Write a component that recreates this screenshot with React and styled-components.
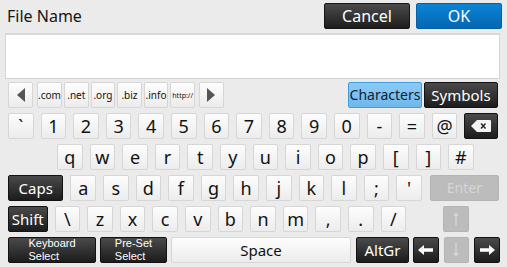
import React from 'react';
import styled, {createGlobalStyle, css} from 'styled-components';

const Global = createGlobalStyle`
    body{
        margin:0;
        background:#ebebeb;
        font-family:"Noto Sans", "Open Sans", sans-serif;
    }
`;

const Page = styled.div`
    width:507px;
    height:267px;
    background:#ebebeb;
    display:flex;
    flex-direction:column;
    box-sizing:border-box;
`;

const Header = styled.div`
    display:flex;
    align-items:center;
    height:33px;
    padding:0 5px 0 7px;
    box-sizing:border-box;
    padding-bottom:2px;

    .title{
        flex:1;
        font-size:16px;
        color:#151515;
    }
`;

const TopBtn = styled.div`
    height:26px;
    width:86px;
    display:flex;
    align-items:center;
    justify-content:center;
    font-size:16px;
    color:#fff;
    border-radius:2px;
    box-sizing:border-box;
    margin-left:${p => p.$gap || 0}px;
    background:${p => p.$blue
        ? 'linear-gradient(#0b84d8, #0466b0)'
        : 'linear-gradient(#4b4b4b, #1d1d1d)'};
    border:1px solid ${p => p.$blue ? '#0660a6' : '#161616'};
`;

const Input = styled.div`
    margin:0 7px 0 5px;
    height:46px;
    background:#fff;
    border:1px solid #d4d4d4;
    border-top:2px solid #d9d9d9;
    box-sizing:border-box;
`;

const Keys = styled.div`
    display:flex;
    flex-direction:column;
    gap:5px;
    padding:3px 9px 0 8px;
`;

const Row = styled.div`
    display:flex;
    align-items:center;
    height:26px;
    gap:${p => p.$gap ?? 7}px;
    padding-left:${p => p.$indent || 0}px;
`;

const light = css`
    background:linear-gradient(#fdfdfd, #ececec);
    border:1px solid #d6d6d6;
    color:#111;
`;
const dark = css`
    background:linear-gradient(#4a4a4a, #1c1c1c);
    border:1px solid #121212;
    color:#fff;
`;
const off = css`
    background:#bcbcbc;
    border:1px solid #b4b4b4;
    color:#d6d6d6;
`;
const active = css`
    background:linear-gradient(#8ccaf5, #6fb8ec);
    border:1px solid #3f9ce0;
    color:#102030;
`;

const Key = styled.div`
    flex:none;
    width:${p => p.$w || 25.6}px;
    height:26px;
    box-sizing:border-box;
    border-radius:2px;
    display:flex;
    align-items:center;
    justify-content:center;
    font-size:${p => p.$fs || 18}px;
    line-height:1;
    margin-left:${p => p.$ml || 0}px;
    ${p => p.$kind === 'dark' ? dark : p.$kind === 'off' ? off : p.$kind === 'on' ? active : light}
`;

const TwoLine = styled.div`
    font-family:"Liberation Sans", Arial, sans-serif;
    font-size:11px;
    line-height:12.8px;
    text-align:left;
`;

const Spacer = styled.div`
    flex:1;
`;

const Tri = ({dir}) => (
    <svg width="10" height="14" viewBox="0 0 10 14">
        {dir === 'l'
            ? <polygon points="9,0 9,14 1,7" fill="#555"/>
            : <polygon points="1,0 1,14 9,7" fill="#555"/>}
    </svg>
);

const Backspace = () => (
    <svg width="20" height="12" viewBox="0 0 20 12">
        <path d="M6 0 H19 a1 1 0 0 1 1 1 V11 a1 1 0 0 1 -1 1 H6 L0 6 Z" fill="#f4f4f4"/>
        <path d="M10 3.5 L14.5 8.5 M14.5 3.5 L10 8.5" stroke="#222" strokeWidth="1.4"/>
    </svg>
);

const Arrow = ({dir, color = '#fff'}) => {
    if (dir === 'l' || dir === 'r') {
        const flip = dir === 'r' ? 'scale(-1,1) translate(-16,0)' : '';
        return (
            <svg width="16" height="10" viewBox="0 0 16 10">
                <g transform={flip}>
                    <polygon points="0,5 6,0 6,3.3 15,3.3 15,6.7 6,6.7 6,10" fill={color}/>
                </g>
            </svg>
        );
    }
    const flip = dir === 'd' ? 'scale(1,-1) translate(0,-16)' : '';
    return (
        <svg width="8" height="16" viewBox="0 0 8 16">
            <g transform={flip}>
                <polygon points="4,1 7,5 4.8,5 4.8,15 3.2,15 3.2,5 1,5" fill={color}/>
            </g>
        </svg>
    );
};

const nums = ['1','2','3','4','5','6','7','8','9','0','-','=','@'];
const qw = ['q','w','e','r','t','y','u','i','o','p','[',']','#'];
const as = ['a','s','d','f','g','h','j','k','l',';',"'"];
const zx = ['\\','z','x','c','v','b','n','m',',','.','/'];
const urls = ['.com','.net','.org','.biz','.info'];

const App = () => {
    return (
        <Page>
            <Global/>
            <Header>
                <div className="title">File Name</div>
                <TopBtn>Cancel</TopBtn>
                <TopBtn $blue $gap={6}>OK</TopBtn>
            </Header>
            <Input/>
            <Keys>
                <Row $gap={2}>
                    <Key $w={25}><Tri dir="l"/></Key>
                    <Key $w={25} $fs={10} $ml={2}>{urls[0]}</Key>
                    {urls.slice(1).map(u => <Key key={u} $w={24.6} $fs={10}>{u}</Key>)}
                    <Key $w={24.6} $fs={7}>http://</Key>
                    <Key $w={25} $ml={2}><Tri dir="r"/></Key>
                    <Spacer/>
                    <Key $w={74} $fs={14} $kind="on">Characters</Key>
                    <Key $w={74} $fs={15} $kind="dark">Symbols</Key>
                </Row>
                <Row>
                    <Key>`</Key>
                    {nums.map(n => <Key key={n}>{n}</Key>)}
                    <Key $w={34} $kind="dark"><Backspace/></Key>
                </Row>
                <Row $indent={49}>
                    {qw.map(k => <Key key={k}>{k}</Key>)}
                </Row>
                <Row>
                    <Key $w={55.4} $fs={15} $kind="dark">Caps</Key>
                    {as.map(k => <Key key={k}>{k}</Key>)}
                    <Key $w={69} $fs={14} $kind="off" $ml={1}>Enter</Key>
                </Row>
                <Row>
                    <Key $w={39.6} $fs={15} $kind="dark">Shift</Key>
                    {zx.map(k => <Key key={k}>{k}</Key>)}
                    <Key $kind="off" $ml={30}><Arrow dir="u" color="#d4d4d4"/></Key>
                </Row>
                <Row $gap={4}>
                    <Key $w={88} $kind="dark"><TwoLine>Keyboard<br/>Select</TwoLine></Key>
                    <Key $w={67} $kind="dark"><TwoLine>Pre-Set<br/>Select</TwoLine></Key>
                    <Key $w={180} $fs={15}>Space</Key>
                    <Key $w={53} $fs={15} $kind="dark" $ml={1}>AltGr</Key>
                    <Key $w={25.6} $kind="dark"><Arrow dir="l"/></Key>
                    <Key $w={25.6} $kind="off" $ml={1}><Arrow dir="d" color="#d4d4d4"/></Key>
                    <Key $w={25.6} $kind="dark" $ml={1}><Arrow dir="r"/></Key>
                </Row>
            </Keys>
        </Page>
    );
};

export default App;
